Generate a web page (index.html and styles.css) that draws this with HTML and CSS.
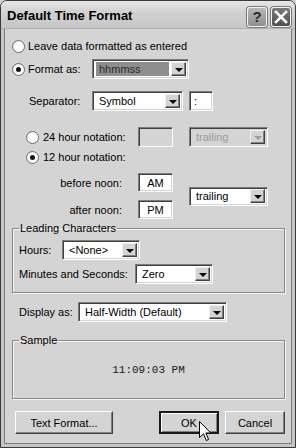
FILE: index.html
```html
<!DOCTYPE html>
<html lang="en">
<head>
    <meta charset="UTF-8">
    <meta name="viewport" content="width=device-width, initial-scale=1.0">
    <title>Default Time Format</title>
    <link rel="stylesheet" href="styles.css">
</head>
<body>
    <div class="window">
        <div class="titlebar">
            <span class="title">Default Time Format</span>
            <span class="tb-btn help">?</span>
            <span class="tb-btn close">
                <svg width="14" height="14" viewBox="0 0 14 14"><path d="M2 2 L12 12 M12 2 L2 12" stroke="#fff" stroke-width="2.6" stroke-linecap="square"/></svg>
            </span>
        </div>
        <div class="client">
            <div class="row r1">
                <span class="radio"></span>
                <span class="lbl">Leave data formatted as entered</span>
            </div>
            <div class="row r2">
                <span class="radio on"></span>
                <span class="lbl w-format">Format as:</span>
                <div class="combo w97">
                    <span class="combo-text sel">hhmmss</span>
                    <span class="combo-btn"><i class="tri"></i></span>
                </div>
            </div>
            <div class="row r3">
                <span class="lbl w-sep">Separator:</span>
                <div class="combo w90">
                    <span class="combo-text">Symbol</span>
                    <span class="combo-btn"><i class="tri"></i></span>
                </div>
                <div class="edit w24">:</div>
            </div>
            <div class="row r4">
                <span class="radio"></span>
                <span class="lbl w-24">24 hour notation:</span>
                <div class="edit w35 disabled"></div>
                <div class="combo w79 disabled">
                    <span class="combo-text">trailing</span>
                    <span class="combo-btn"><i class="tri"></i></span>
                </div>
            </div>
            <div class="row r5">
                <span class="radio on"></span>
                <span class="lbl">12 hour notation:</span>
            </div>
            <div class="noon">
                <span class="lbl right">before noon:</span>
                <div class="edit w35 ctr">AM</div>
                <div class="combo w79 span2">
                    <span class="combo-text">trailing</span>
                    <span class="combo-btn"><i class="tri"></i></span>
                </div>
                <span class="lbl right">after noon:</span>
                <div class="edit w35 ctr">PM</div>
            </div>
            <fieldset class="group lead">
                <legend>Leading Characters</legend>
                <div class="row">
                    <span class="lbl w-hours">Hours:</span>
                    <div class="combo w78">
                        <span class="combo-text">&lt;None&gt;</span>
                        <span class="combo-btn"><i class="tri"></i></span>
                    </div>
                </div>
                <div class="row gap-row">
                    <span class="lbl w-mins">Minutes and Seconds:</span>
                    <div class="combo w78">
                        <span class="combo-text">Zero</span>
                        <span class="combo-btn"><i class="tri"></i></span>
                    </div>
                </div>
            </fieldset>
            <div class="row r-display">
                <span class="lbl w-display">Display as:</span>
                <div class="combo w149">
                    <span class="combo-text">Half-Width (Default)</span>
                    <span class="combo-btn"><i class="tri"></i></span>
                </div>
            </div>
            <fieldset class="group sample">
                <legend>Sample</legend>
                <div class="sample-text">11:09:03 PM</div>
            </fieldset>
            <div class="buttons">
                <button class="btn w98">Text Format...</button>
                <button class="btn w60 default">OK</button>
                <button class="btn w60">Cancel</button>
            </div>
        </div>
        <svg class="cursor" width="13" height="22" viewBox="0 0 13 22">
            <path d="M0.5 0.5 L0.5 16.5 L4.5 12.8 L7.3 19.5 L9.6 18.5 L6.9 12 L11.8 12 Z" fill="#fff" stroke="#000" stroke-width="1"/>
        </svg>
    </div>
</body>
</html>
```

FILE: styles.css
```css
* {
    box-sizing: border-box;
}
body {
    margin: 0;
    font-family: "Liberation Sans", Arial, sans-serif;
    font-size: 11px;
    color: #000;
    background: #d4d4d4;
}
.window {
    position: relative;
    width: 296px;
    height: 448px;
    border: 1px solid #3a3a3a;
    border-radius: 7px 7px 0 0;
    background: #d4d4d4;
    overflow: hidden;
}
.titlebar {
    display: flex;
    align-items: center;
    height: 28px;
    padding: 0 4px 0 6px;
    background: linear-gradient(#e6e6e6, #d2d2d2 40%, #c6c6c6);
    border-bottom: 1px solid #b0b0b0;
}
.title {
    flex: 1;
    font-size: 13px;
    font-weight: bold;
    margin-top: 1px;
}
.tb-btn {
    display: flex;
    align-items: center;
    justify-content: center;
    width: 20px;
    height: 20px;
    margin-top: 4px;
    border-radius: 3px;
    border: 1px solid #f4f4f4;
    box-shadow: 0 0 0 1px #7a7a7a;
}
.help {
    background: linear-gradient(#b8b8b8, #8e8e8e);
    color: #2a2a2a;
    font-size: 15px;
    font-weight: bold;
    margin-right: 4px;
}
.close {
    background: linear-gradient(#7a7a7a, #4e4e4e);
}
.client {
    height: 418px;
    border: 3px solid #c4c4c4;
    border-top: 0;
    box-shadow: inset 1px 0 #7c7c7c, inset -1px 0 #7c7c7c, inset 0 -1px #7c7c7c;
    padding: 7px 7px 0 8px;
}
.row {
    display: flex;
    align-items: center;
    height: 20px;
}
.r2 { margin-top: 3px; }
.r3 { margin-top: 12px; }
.r4 { margin-top: 16px; padding-left: 14px; }
.r5 { padding-left: 14px; }
.r3 .edit { margin-left: 6px; }
.r4 .combo { margin-left: 16px; }
.radio {
    flex: none;
    position: relative;
    width: 13px;
    height: 13px;
    margin-right: 3px;
    border-radius: 50%;
    background: radial-gradient(circle at 65% 65%, #fff 45%, #dcdcdc);
    border: 1px solid #6e6e6e;
}
.r4 .radio, .r5 .radio { margin-right: 4px; }
.radio.on::after {
    content: "";
    position: absolute;
    left: 3px;
    top: 3px;
    width: 5px;
    height: 5px;
    border-radius: 50%;
    background: #111;
}
.lbl {
    white-space: nowrap;
}
.right {
    text-align: right;
}
.w-format { width: 64px; }
.w-sep { width: 63px; margin-left: 17px; }
.w-24 { width: 95px; }
.w-hours { width: 43px; }
.w-mins { width: 116px; }
.w-display { width: 59px; }
.combo, .edit {
    display: flex;
    align-items: center;
    height: 20px;
    background: #fff;
    border: 1px solid;
    border-color: #7c7c7c #fff #fff #7c7c7c;
    box-shadow: inset 1px 1px #404040, inset -1px -1px #d4d4d4;
}
.combo {
    padding: 2px 2px 2px 3px;
}
.edit {
    padding: 0 4px;
}
.ctr {
    justify-content: center;
    padding: 0;
    height: 19px;
}
.combo-text {
    flex: 1;
    align-self: stretch;
    display: flex;
    align-items: center;
    padding-left: 3px;
    white-space: nowrap;
    overflow: hidden;
}
.combo-text.sel {
    background: #8e8e8e;
    color: #2b2b2b;
    margin-right: 2px;
}
.combo-btn {
    flex: none;
    display: flex;
    align-items: center;
    justify-content: center;
    width: 15px;
    height: 14px;
    background: #d4d4d4;
    border: 1px solid;
    border-color: #f0f0f0 #404040 #404040 #f0f0f0;
    box-shadow: inset -1px -1px #808080;
}
.tri {
    width: 0;
    height: 0;
    border-left: 4px solid transparent;
    border-right: 4px solid transparent;
    border-top: 4px solid #000;
    margin-top: 1px;
}
.disabled {
    background: #d4d4d4;
    color: #9c9c9c;
}
.disabled .tri {
    border-top-color: #9c9c9c;
}
.w24 { width: 24px; }
.w35 { width: 35px; }
.w78 { width: 78px; }
.w79 { width: 79px; }
.w90 { width: 91px; }
.w97 { width: 97px; }
.w149 { width: 149px; }
.noon {
    display: grid;
    grid-template-columns: 110px 35px 79px;
    grid-template-rows: 19px 19px;
    column-gap: 16px;
    row-gap: 8px;
    align-items: center;
    margin-top: 6px;
}
.span2 {
    grid-column: 3;
    grid-row: 1 / span 2;
    height: 19px;
}
.group {
    margin: 0;
    border: 1px solid #8a8a8a;
    box-shadow: 1px 1px #f4f4f4, inset 1px 1px #f4f4f4;
    padding: 0 6px;
}
.group legend {
    padding: 0 1px;
    margin-left: 0;
}
.lead {
    margin-top: 3px;
    padding-top: 6px;
    padding-bottom: 6px;
    height: 71px;
}
.gap-row { margin-top: 4px; }
.r-display {
    margin-top: 9px;
    padding-left: 7px;
}
.sample {
    margin-top: 12px;
    height: 65px;
}
.sample-text {
    font-family: "Liberation Mono", "Courier New", monospace;
    font-size: 11px;
    color: #1a1a1a;
    text-align: center;
    margin-top: 18px;
}
.buttons {
    display: flex;
    gap: 6px;
    margin-top: 12px;
    padding-left: 3px;
}
.btn {
    height: 23px;
    font-family: inherit;
    font-size: 11px;
    color: #000;
    background: #d4d4d4;
    border: 1px solid;
    border-color: #fff #404040 #404040 #fff;
    box-shadow: inset -1px -1px #808080;
    padding: 0;
}
.w98 { width: 98px; }
.w60 { width: 60px; }
.default {
    margin-left: auto;
    border: 2px solid;
    border-color: #1a1a1a;
    box-shadow: inset 1px 1px #fff, inset -1px -1px #808080;
}
.cursor {
    position: absolute;
    left: 198px;
    top: 420px;
}
```
